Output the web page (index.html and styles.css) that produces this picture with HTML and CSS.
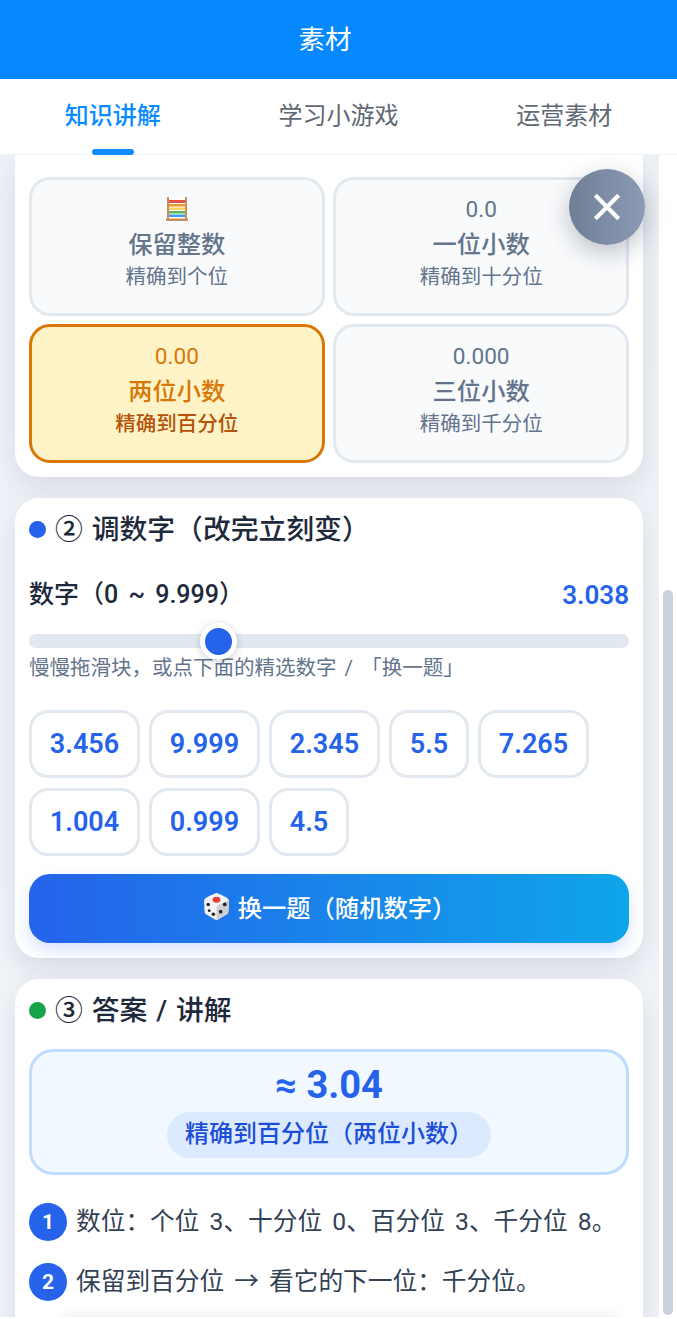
FILE: index.html
```html
<!DOCTYPE html>
<html lang="zh-CN">
<head>
    <meta charset="UTF-8">
    <meta name="viewport" content="width=device-width, initial-scale=1.0">
    <title>素材</title>
    <link rel="stylesheet" href="styles.css">
</head>
<body>
    <div class="app">
        <header class="app-header">素材</header>

        <nav class="tabs">
            <div class="tab active">知识讲解</div>
            <div class="tab">学习小游戏</div>
            <div class="tab">运营素材</div>
        </nav>

        <div class="scroll-area">
            <main class="panel">
                <!-- Section 1, scrolled partly out of view -->
                <section class="card card-first">
                    <div class="mode-grid">
                        <div class="mode">
                            <div class="mode-top">
                                <svg class="abacus" viewBox="0 0 24 26" width="24" height="26">
                                    <rect x="2" y="1" width="20" height="23" fill="#fff"/>
                                    <rect x="3" y="4" width="18" height="3" fill="#e2504c"/>
                                    <rect x="3" y="8" width="18" height="2.5" fill="#f0992e"/>
                                    <rect x="3" y="11.5" width="18" height="2.5" fill="#f7d65a"/>
                                    <rect x="3" y="15" width="18" height="2.5" fill="#5cb85c"/>
                                    <rect x="3" y="18.5" width="18" height="2.5" fill="#3f9be8"/>
                                    <rect x="2" y="1" width="2" height="23" fill="#c98f5a"/>
                                    <rect x="20" y="1" width="2" height="23" fill="#c98f5a"/>
                                    <rect x="1" y="22.5" width="22" height="2.5" fill="#c98f5a"/>
                                </svg>
                            </div>
                            <div class="mode-name">保留整数</div>
                            <div class="mode-sub">精确到个位</div>
                        </div>
                        <div class="mode">
                            <div class="mode-top">0.0</div>
                            <div class="mode-name">一位小数</div>
                            <div class="mode-sub">精确到十分位</div>
                        </div>
                        <div class="mode selected">
                            <div class="mode-top">0.00</div>
                            <div class="mode-name">两位小数</div>
                            <div class="mode-sub">精确到百分位</div>
                        </div>
                        <div class="mode">
                            <div class="mode-top">0.000</div>
                            <div class="mode-name">三位小数</div>
                            <div class="mode-sub">精确到千分位</div>
                        </div>
                    </div>
                </section>

                <!-- Section 2 -->
                <section class="card">
                    <h2 class="card-title"><span class="dot dot-blue"></span>② 调数字（改完立刻变）</h2>
                    <div class="number-row">
                        <span class="number-label">数字（0 ~ 9.999）</span>
                        <span class="number-value">3.038</span>
                    </div>
                    <div class="slider">
                        <span class="slider-thumb"></span>
                    </div>
                    <p class="hint">慢慢拖滑块，或点下面的精选数字 / 「换一题」</p>
                    <div class="chips">
                        <span class="chip">3.456</span>
                        <span class="chip">9.999</span>
                        <span class="chip">2.345</span>
                        <span class="chip">5.5</span>
                        <span class="chip">7.265</span>
                        <span class="chip">1.004</span>
                        <span class="chip">0.999</span>
                        <span class="chip">4.5</span>
                    </div>
                    <button class="random-btn">
                        <svg class="dice" viewBox="0 0 28 28" width="29" height="29">
                            <path d="M14 1 Q15 1 24 5.5 Q26 6.5 26 9 L25.5 19 Q25.5 20.5 24 21.5 L15.5 26.5 Q14 27.5 12.5 26.5 L4 21.5 Q2.5 20.5 2.5 19 L2 9 Q2 6.5 4 5.5 Q13 1 14 1 Z" fill="#f4f4f5"/>
                            <path d="M14 14 L25.6 7.5 Q26 8 26 9 L25.5 19 Q25.5 20.5 24 21.5 L15.5 26.5 Q14.7 27 14 27 Z" fill="#cdd0d4"/>
                            <ellipse cx="14" cy="7.5" rx="3.8" ry="2.8" fill="#e8403c"/>
                            <circle cx="6" cy="12" r="1.7" fill="#26262b"/>
                            <circle cx="11" cy="21.5" r="1.7" fill="#26262b"/>
                            <circle cx="7" cy="18" r="1.4" fill="#26262b"/>
                            <circle cx="22" cy="12" r="1.8" fill="#26262b"/>
                            <circle cx="18" cy="19" r="1.8" fill="#26262b"/>
                        </svg>
                        换一题（随机数字）
                    </button>
                </section>

                <!-- Section 3 -->
                <section class="card card-last">
                    <h2 class="card-title"><span class="dot dot-green"></span>③ 答案 / 讲解</h2>
                    <div class="answer">
                        <div class="answer-value">≈ 3.04</div>
                        <div class="answer-pill">精确到百分位（两位小数）</div>
                    </div>
                    <div class="step">
                        <span class="step-num">1</span>
                        <span>数位：个位 3、十分位 0、百分位 3、千分位 8。</span>
                    </div>
                    <div class="step">
                        <span class="step-num">2</span>
                        <span>保留到百分位 → 看它的下一位：千分位。</span>
                    </div>
                    <div class="next-box"></div>
                </section>
            </main>

            <div class="scroll-track">
                <div class="scroll-thumb"></div>
            </div>
        </div>

        <!-- Floating close button -->
        <button class="close-btn">
            <svg viewBox="0 0 24 24" width="28" height="28">
                <path d="M2 2 L22 22 M22 2 L2 22" stroke="#fff" stroke-width="3.6" fill="none"/>
            </svg>
        </button>
    </div>
</body>
</html>
```

FILE: styles.css
```css
* {
    box-sizing: border-box;
}

html, body {
    margin: 0;
    height: 100%;
    overflow: hidden;
}

body {
    font-family: Roboto, "Noto Sans CJK SC", sans-serif;
    background-color: white;
}

.app {
    position: relative;
    display: flex;
    flex-direction: column;
    height: 100vh;
}

/* Top bar */
.app-header {
    height: 79px;
    flex-shrink: 0;
    display: flex;
    align-items: center;
    justify-content: center;
    padding: 0 27px 4px 0;
    background-color: #0688ff;
    color: white;
    font-size: 26.5px;
}

/* Tabs */
.tabs {
    height: 76px;
    flex-shrink: 0;
    display: flex;
    background-color: white;
    border-bottom: 1px solid #f1f3f6;
}

.tab {
    position: relative;
    flex: 1;
    text-align: center;
    padding-top: 19px;
    font-size: 24px;
    line-height: 36px;
    color: #5f6874;
}

.tab.active {
    color: #0a8bff;
    font-weight: 500;
}

.tab.active::after {
    content: "";
    position: absolute;
    left: 50%;
    bottom: -1px;
    width: 42px;
    height: 6px;
    margin-left: -21px;
    border-radius: 3px;
    background-color: #0a8bff;
}

.scroll-area {
    flex: 1;
    min-height: 0;
    display: flex;
    padding-bottom: 2px;
}

.panel {
    width: 659px;
    flex-shrink: 0;
    padding: 0 16px 0 15px;
    display: flex;
    flex-direction: column;
    gap: 21px;
    background: linear-gradient(180deg, #eef2f8, #f1f5fa);
    overflow: hidden;
}

.scroll-track {
    flex: 1;
    padding: 435px 4px 2px;
}

.scroll-thumb {
    height: 725px;
    border-radius: 5px;
    background-color: #c9d1dd;
}

/* Cards */
.card {
    flex-shrink: 0;
    padding: 14px 14px 15px;
    border-radius: 24px;
    background-color: white;
    box-shadow: 0 12px 30px rgba(15, 23, 42, 0.1);
}

.card-first {
    padding-top: 22px;
    padding-bottom: 14px;
    border-radius: 0 0 24px 24px;
}

.card-title {
    display: flex;
    align-items: center;
    margin: 0;
    font-size: 27.8px;
    line-height: 36px;
    font-weight: 500;
    word-spacing: 2px;
    color: #1e293b;
}

.dot {
    width: 17px;
    height: 17px;
    border-radius: 50%;
    margin-right: 9px;
}

.dot-blue {
    background-color: #2563eb;
}

.dot-green {
    background-color: #16a34a;
}

/* Rounding modes */
.mode-grid {
    display: grid;
    grid-template-columns: 1fr 1fr;
    gap: 8.7px;
}

.mode {
    height: 138.5px;
    padding-top: 16px;
    border: 3px solid #e2e8f0;
    border-radius: 21px;
    background-color: #f8fafc;
    color: #64748b;
    text-align: center;
}

.mode-top {
    height: 28px;
    font-size: 22.6px;
    line-height: 28px;
}

.abacus {
    display: block;
    margin: 0 auto;
}

.mode-name {
    margin-top: 4px;
    font-size: 24.3px;
    line-height: 34px;
    font-weight: 500;
}

.mode-sub {
    font-size: 20.5px;
    line-height: 30px;
}

.mode.selected {
    background-color: #fef3c7;
    border-color: #d97706;
    color: #d97706;
}

.mode.selected .mode-sub {
    color: #b45309;
    font-weight: 500;
}

/* Number picker */
.number-row {
    display: flex;
    justify-content: space-between;
    align-items: center;
    margin-top: 29px;
    font-size: 25px;
    line-height: 36px;
    word-spacing: 4px;
}

.number-label {
    font-weight: 500;
    color: #1e293b;
}

.number-value {
    font-size: 26px;
    font-weight: 600;
    color: #2563eb;
}

.slider {
    position: relative;
    height: 14px;
    margin-top: 21px;
    border-radius: 7px;
    background-color: #e2e8f0;
}

.slider-thumb {
    position: absolute;
    left: 171px;
    top: -11px;
    width: 37px;
    height: 37px;
    border: 5px solid white;
    border-radius: 50%;
    background-color: #2563eb;
    box-shadow: 0 2px 8px rgba(15, 23, 42, 0.2);
}

.hint {
    margin: 6px 0 0;
    font-size: 20.5px;
    line-height: 28px;
    word-spacing: 3px;
    color: #64748b;
}

.chips {
    display: flex;
    flex-wrap: wrap;
    gap: 10px 9px;
    margin-top: 28px;
}

.chip {
    height: 68px;
    padding: 0 17.8px;
    display: flex;
    align-items: center;
    border: 3px solid #e2e8f0;
    border-radius: 19px;
    background-color: white;
    color: #2563eb;
    font-size: 27px;
    font-weight: 600;
}

.random-btn {
    width: 100%;
    height: 69px;
    margin-top: 18px;
    padding: 0 0 3px;
    display: flex;
    align-items: center;
    justify-content: center;
    gap: 7px;
    border: none;
    border-radius: 21px;
    background: linear-gradient(90deg, #2563eb, #0ea5e9);
    color: white;
    font-family: inherit;
    font-size: 24.3px;
    font-weight: 500;
    box-shadow: 0 8px 16px rgba(37, 99, 235, 0.18);
}

/* Answer */
.answer {
    height: 126px;
    margin-top: 20px;
    padding-top: 10px;
    border: 3px solid #bfdbfe;
    border-radius: 24px;
    background-color: #f2f8ff;
    text-align: center;
}

.answer-value {
    font-size: 38px;
    line-height: 46px;
    font-weight: 700;
    color: #2563eb;
}

.answer-pill {
    display: inline-block;
    height: 46px;
    margin-top: 4px;
    padding: 0 18px;
    border-radius: 23px;
    background-color: #dbeafe;
    color: #1d4ed8;
    font-size: 24px;
    line-height: 44px;
    font-weight: 500;
}

.step {
    display: flex;
    align-items: center;
    gap: 9px;
    margin-top: 22px;
    font-size: 24.7px;
    line-height: 38px;
    word-spacing: 4px;
    color: #334155;
}

.answer + .step {
    margin-top: 28px;
}

.step-num {
    width: 38px;
    height: 38px;
    flex-shrink: 0;
    border-radius: 50%;
    background-color: #2563eb;
    color: white;
    font-size: 21px;
    font-weight: 700;
    text-align: center;
}

/* Only the shadow of the next block shows above the fold */
.next-box {
    height: 20px;
    margin: 18px 6px 0 30px;
    border-radius: 12px 12px 0 0;
    background-color: white;
    box-shadow: 0 -3px 14px rgba(0, 0, 0, 0.09);
}

/* Floating button */
.close-btn {
    position: absolute;
    left: 569px;
    top: 169px;
    width: 76px;
    height: 76px;
    display: flex;
    align-items: center;
    justify-content: center;
    padding: 0;
    border: none;
    border-radius: 50%;
    background: linear-gradient(90deg, #6f7f95, #8b9bb5);
    box-shadow: 0 8px 24px rgba(15, 23, 42, 0.25);
}
```
